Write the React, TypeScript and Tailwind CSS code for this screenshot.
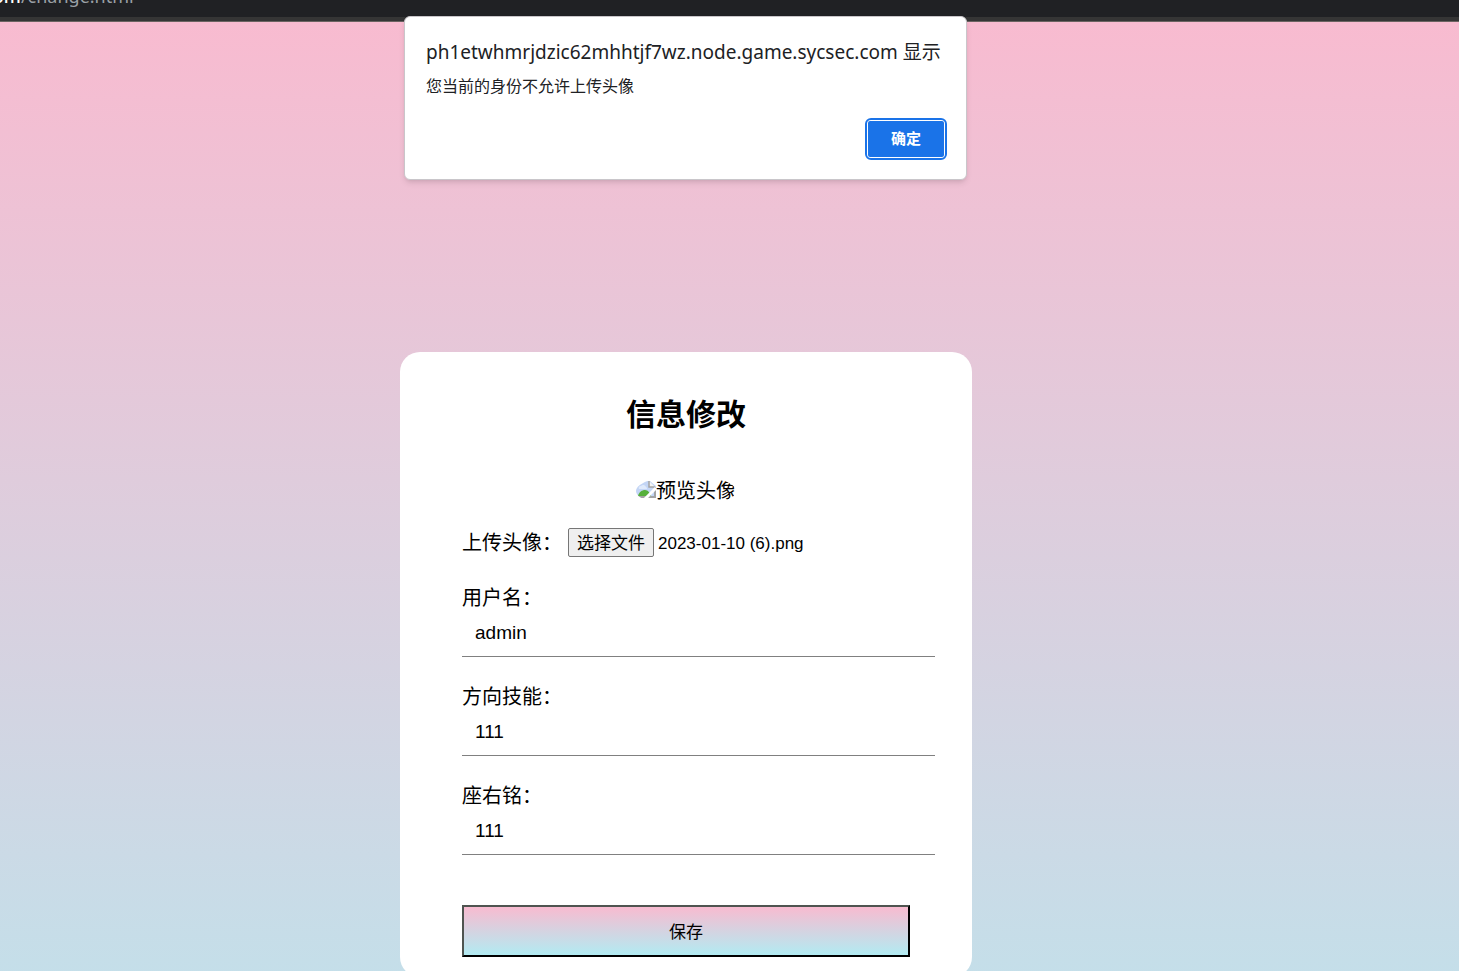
import React, { useRef, useState } from "react";

// Text fields of the profile form
interface Field {
  id: string;
  label: string;
  value: string;
}

const FIELDS: Array<Field> = [
  { id: "username", label: "用户名：", value: "admin" },
  { id: "skill", label: "方向技能：", value: "111" },
  { id: "motto", label: "座右铭：", value: "111" },
];

// Strip of the browser's address bar
function AddressBar() {
  return (
    <div className="shrink-0 h-[22px] bg-[#202124] border-b border-[#6b6361]">
      <div className="flex h-[21px] items-end overflow-hidden border-b-4 border-[#353535] pb-[9px] font-['Noto_Sans',sans-serif] text-lg leading-6 text-[#9aa0a6]">
        <span className="-ml-4 font-medium text-white">com</span>
        <span>/change.html</span>
      </div>
    </div>
  );
}

function BrokenImage() {
  return (
    <svg className="shrink-0" width="20" height="20" viewBox="0 0 20 20" aria-hidden="true">
      <path d="M0 0h14l6 5v12H0z" fill="#c3d5f5" />
      <path d="M13 0v6h6" fill="#f4f4f4" stroke="#a3a3a3" strokeWidth="1.5" />
      <path d="M3 8a2 2 0 0 1 2-3 3 3 0 0 1 5 1 2 2 0 0 1 1 2z" fill="#dfeafb" />
      <path d="M2 15c1-4 4-6 7-6s5 3 6 6z" fill="#57b03c" />
      <path d="M1 16h18V6" fill="none" stroke="#a3a3a3" strokeWidth="2" />
      <path d="M9 18 20 7" stroke="#fff" strokeWidth="3" />
    </svg>
  );
}

// Native style alert shown over the page
function AlertDialog({ onClose }: { onClose: () => void }) {
  return (
    <div className="absolute inset-x-0 top-4 flex justify-center pr-[88px]">
      <div
        role="alertdialog"
        aria-labelledby="alert-title"
        aria-describedby="alert-text"
        className="flex w-[563px] flex-col rounded-md border border-[#c9c6ca] bg-white pt-[21px] pr-[19px] pb-[19px] pl-[21px] text-[#202124] shadow-md"
      >
        <h1 id="alert-title" className="whitespace-nowrap text-[19px] leading-7 font-['Noto_Sans','Noto_Sans_CJK_SC',sans-serif]">
          ph1etwhmrjdzic62mhhtjf7wz.node.game.sycsec.com 显示
        </h1>
        <p id="alert-text" className="mt-[9px] text-base leading-6">
          您当前的身份不允许上传头像
        </p>
        <button
          onClick={onClose}
          className="mt-[19px] h-[42px] w-[82px] self-end rounded-md border-2 border-[#1a73e8] bg-white p-px text-[15px] font-bold text-white"
        >
          <span className="flex h-full items-center justify-center rounded-xs bg-[#1a73e8]">确定</span>
        </button>
      </div>
    </div>
  );
}

export default function App() {
  const [alertOpen, setAlertOpen] = useState(true);
  const [fileName, setFileName] = useState("2023-01-10 (6).png");
  const fileInput = useRef<HTMLInputElement>(null);

  return (
    <div className="relative flex h-screen flex-col overflow-hidden font-['Liberation_Sans','Noto_Sans_CJK_SC',sans-serif] text-black">
      <AddressBar />

      <main className="flex flex-1 items-start justify-center bg-linear-to-b/srgb from-[#f8bbd0] to-[#b2ebf2] to-[135%] pt-[330px] pr-[87px]">
        <form
          onSubmit={(e) => e.preventDefault()}
          className="flex w-[572px] shrink-0 flex-col rounded-[20px] bg-white px-[62px] pt-[43px] pb-5"
        >
          <h2 className="text-center text-[30px] leading-10 font-bold">信息修改</h2>

          {/* Avatar preview, cut to an ellipse */}
          <div className="mt-10 flex h-8 w-[100px] items-center self-center overflow-hidden rounded-[50%] text-xl leading-6 whitespace-nowrap">
            <BrokenImage />
            <span>预览头像</span>
          </div>

          <div className="mt-[21px] flex h-[29px] items-center">
            <label htmlFor="avatar" className="w-[106px] text-xl leading-6">
              上传头像：
            </label>
            <input
              id="avatar"
              ref={fileInput}
              type="file"
              className="hidden"
              onChange={(e) => setFileName(e.target.files?.[0]?.name ?? "")}
            />
            <button
              type="button"
              onClick={() => fileInput.current?.click()}
              className="h-[29px] w-[86px] rounded-xs border border-[#767676] bg-[#efefef] pt-0.5 text-[17px] leading-6"
            >
              选择文件
            </button>
            <span className="ml-1 pt-0.5 text-[17px] leading-6">{fileName}</span>
          </div>

          <div className="mt-[27px] flex flex-col gap-[26px]">
            {FIELDS.map((field) => (
              <div key={field.id} className="flex flex-col">
                <label htmlFor={field.id} className="text-xl leading-7">
                  {field.label}
                </label>
                <input
                  id={field.id}
                  type="text"
                  defaultValue={field.value}
                  className="h-[45px] w-[calc(100%+25px)] border-b border-[#808080] px-[13px] pb-0.5 text-[19px] outline-none"
                />
              </div>
            ))}
          </div>

          <button
            type="submit"
            className="mt-[50px] h-[52px] border-2 border-t-[#4f5450] border-r-black border-b-black border-l-[#4f5450] bg-linear-to-b/srgb from-[#f8bbd0] to-[#b2ebf2] pt-1 text-[17px]"
          >
            保存
          </button>
        </form>
      </main>

      {alertOpen && <AlertDialog onClose={() => setAlertOpen(false)} />}
    </div>
  );
}
